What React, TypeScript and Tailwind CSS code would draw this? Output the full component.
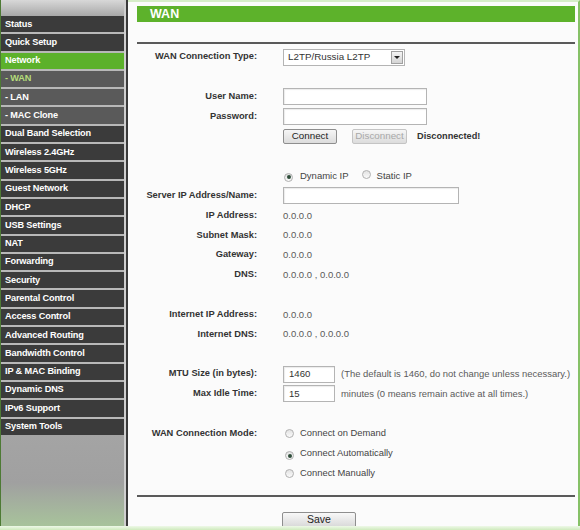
import React from "react";

type Item = { t: string; kind?: "active" | "sub" | "subsel" };

const menu: Item[] = [
  { t: "Status" },
  { t: "Quick Setup" },
  { t: "Network", kind: "active" },
  { t: "- WAN", kind: "subsel" },
  { t: "- LAN", kind: "sub" },
  { t: "- MAC Clone", kind: "sub" },
  { t: "Dual Band Selection" },
  { t: "Wireless 2.4GHz" },
  { t: "Wireless 5GHz" },
  { t: "Guest Network" },
  { t: "DHCP" },
  { t: "USB Settings" },
  { t: "NAT" },
  { t: "Forwarding" },
  { t: "Security" },
  { t: "Parental Control" },
  { t: "Access Control" },
  { t: "Advanced Routing" },
  { t: "Bandwidth Control" },
  { t: "IP & MAC Binding" },
  { t: "Dynamic DNS" },
  { t: "IPv6 Support" },
  { t: "System Tools" },
];

function MenuItem({ item }: { item: Item }) {
  let cls = "bg-[#3b3b3b] text-white";
  if (item.kind === "active") cls = "bg-[#5cb12b] text-white";
  if (item.kind === "sub") cls = "bg-[#5a5a5a] text-white";
  if (item.kind === "subsel") cls = "bg-[#5a5a5a] text-[#b5dd7a]";
  return (
    <div
      className={`h-[16.3px] flex items-center pl-[4px] font-bold text-[9.2px] leading-none tracking-[-0.15px] ${cls}`}
    >
      {item.t}
    </div>
  );
}

function Radio({ checked }: { checked?: boolean }) {
  return (
    <span className="inline-flex w-[9px] h-[9px] rounded-full border border-[#b0b0b0] bg-gradient-to-b from-[#e2e2e2] to-[#fafafa] items-center justify-center shrink-0">
      {checked && <span className="w-[4px] h-[4px] rounded-full bg-[#2f4d3a]" />}
    </span>
  );
}

function TextBox({ w, value }: { w: string; value?: string }) {
  return (
    <div
      className={`${w} h-[17px] border border-[#b4b4b4] bg-white shadow-[inset_1px_1px_1px_rgba(0,0,0,0.08)] flex items-center pl-[5px] text-[9.6px] text-[#333]`}
    >
      {value}
    </div>
  );
}

function Btn({ children, disabled, w }: { children: React.ReactNode; disabled?: boolean; w: string }) {
  return (
    <div
      className={`${w} h-[15px] border ${
        disabled ? "border-[#c4c4c4] text-[#a8a8a8]" : "border-[#8e8e8e] text-[#222]"
      } rounded-[2px] bg-gradient-to-b from-[#f6f6f6] to-[#dcdcdc] flex items-center justify-center text-[9.8px]`}
    >
      {children}
    </div>
  );
}

function Row({ label, children }: { label?: string; children?: React.ReactNode }) {
  return (
    <div className="h-[19.8px] grid grid-cols-[120px_1fr] gap-x-[26px] items-center">
      <div className="text-right font-bold text-[9.3px] text-[#333] whitespace-nowrap">{label}</div>
      <div className="flex items-center text-[9.5px] text-[#5a5a5a] whitespace-nowrap">{children}</div>
    </div>
  );
}

export default function App() {
  return (
    <div
      className="w-[580px] h-[530px] flex overflow-hidden bg-white relative"
      style={{ fontFamily: '"Liberation Sans", Arial, sans-serif' }}
    >
      {/* Sidebar */}
      <div className="w-[128px] h-full flex bg-gradient-to-b from-[#c9c9c9] via-[#a3a3a3] to-[#9e9e9e]">
        <div className="w-[1px] h-full bg-[#4d7a34]" />
        <div className="w-[123px] flex flex-col">
          <div className="h-[16px] bg-gradient-to-b from-[#d8d8d8] to-[#a8a8a8]" />
          <div className="flex flex-col gap-[2px] bg-[#b8b8b8]">
            {menu.map((m) => (
              <MenuItem key={m.t} item={m} />
            ))}
          </div>
          <div className="flex-1 bg-gradient-to-b from-[#a4a4a4] via-[#a0a0a0] to-[#a8c69a]" />
        </div>
        <div className="w-[2px] h-full bg-[#cfcfcf]" />
        <div className="w-[2px] h-full bg-[#3a3a3a]" />
      </div>

      {/* Content */}
      <div className="flex-1 h-full flex flex-col bg-[#fbfbfb] pl-[9px] pr-[3px] border-r-[2px] border-[#86c167] border-t-[2px] border-t-[#d6edc8]">
        <div className="mt-[4px] h-[16px] bg-[#5db22b] flex items-center pl-[13px] text-white font-bold text-[12.5px]">
          WAN
        </div>
        <div className="mt-[20px] h-[1.5px] bg-[#5a5a5a]" />
        <div className="mt-[4px] flex flex-col">
          <Row label="WAN Connection Type:">
            <div className="w-[122px] h-[17px] border border-[#b4b4b4] bg-white flex items-center justify-between pl-[4px] pr-[1px] text-[9.8px] text-[#333]">
              <span>L2TP/Russia L2TP</span>
              <span className="w-[12px] h-[13px] border border-[#a0a0a0] bg-gradient-to-b from-[#f4f4f4] to-[#d4d4d4] flex items-center justify-center">
                <span className="w-0 h-0 border-l-[3px] border-r-[3px] border-t-[3px] border-l-transparent border-r-transparent border-t-[#222]" />
              </span>
            </div>
          </Row>
          <Row />
          <Row label="User Name:">
            <TextBox w="w-[144px]" />
          </Row>
          <Row label="Password:">
            <TextBox w="w-[144px]" />
          </Row>
          <Row>
            <Btn w="w-[54px]">Connect</Btn>
            <div className="ml-[15px]">
              <Btn w="w-[55px]" disabled>
                Disconnect
              </Btn>
            </div>
            <span className="ml-[10px] font-bold text-[9.2px] text-[#333]">Disconnected!</span>
          </Row>
          <Row />
          <Row>
            <span className="ml-[1px]">
              <Radio checked />
            </span>
            <span className="ml-[7px] text-[9.5px] text-[#444]">Dynamic IP</span>
            <span className="ml-[13px]">
              <Radio />
            </span>
            <span className="ml-[6px] text-[9.5px] text-[#444]">Static IP</span>
          </Row>
          <Row label="Server IP Address/Name:">
            <TextBox w="w-[176px]" />
          </Row>
          <Row label="IP Address:">0.0.0.0</Row>
          <Row label="Subnet Mask:">0.0.0.0</Row>
          <Row label="Gateway:">0.0.0.0</Row>
          <Row label="DNS:">0.0.0.0 , 0.0.0.0</Row>
          <Row />
          <Row label="Internet IP Address:">0.0.0.0</Row>
          <Row label="Internet DNS:">0.0.0.0 , 0.0.0.0</Row>
          <Row />
          <Row label="MTU Size (in bytes):">
            <TextBox w="w-[52px]" value="1460" />
            <span className="ml-[6px] text-[9.45px]">(The default is 1460, do not change unless necessary.)</span>
          </Row>
          <Row label="Max Idle Time:">
            <TextBox w="w-[52px]" value="15" />
            <span className="ml-[6px] text-[9.45px]">minutes (0 means remain active at all times.)</span>
          </Row>
          <Row />
          <Row label="WAN Connection Mode:">
            <span className="ml-[2px] mt-[3px]">
              <Radio />
            </span>
            <span className="ml-[6px] text-[9.4px] text-[#444]">Connect on Demand</span>
          </Row>
          <Row>
            <span className="ml-[2px] mt-[3px]">
              <Radio checked />
            </span>
            <span className="ml-[6px] text-[9.4px] text-[#444]">Connect Automatically</span>
          </Row>
          <Row>
            <span className="ml-[2px] mt-[3px]">
              <Radio />
            </span>
            <span className="ml-[6px] text-[9.4px] text-[#444]">Connect Manually</span>
          </Row>
        </div>
        <div className="mt-[12px] h-[1.5px] bg-[#5a5a5a]" />
        <div className="mt-[15px] pl-[145px]">
          <div className="w-[74px] h-[16px] border border-[#8e8e8e] rounded-[2px] bg-gradient-to-b from-[#f8f8f8] to-[#d8d8d8] flex items-center justify-center text-[10.5px] text-[#222]">
            Save
          </div>
        </div>
        <div className="flex-1" />
      </div>
      <div className="absolute left-0 bottom-0 w-full h-[4px] bg-gradient-to-b from-[#eef8e8] to-[#cfeabd] pointer-events-none" />
    </div>
  );
}
